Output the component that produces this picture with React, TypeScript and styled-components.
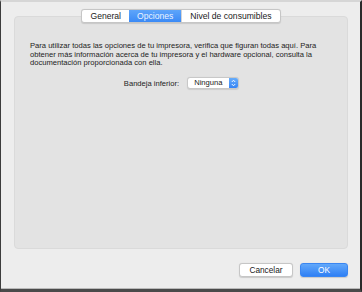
import React, { useState } from 'react';
import styled, { createGlobalStyle } from 'styled-components';

const GlobalStyle = createGlobalStyle`
html, body {
  margin: 0;
  padding: 0;
  background: #ededed;
}
* {
  box-sizing: border-box;
}
`;

const tabs = ['General', 'Opciones', 'Nivel de consumibles'];

export default function App() {
  const [active, setActive] = useState('Opciones');

  return (
    <>
      <GlobalStyle />
      <Window>
        <TabBar>
          {tabs.map(tab => (
            <Tab key={tab} $active={tab === active} onClick={() => setActive(tab)}>
              {tab}
            </Tab>
          ))}
        </TabBar>
        <Panel>
          <Intro>
            Para utilizar todas las opciones de tu impresora, verifica que figuran todas aquí. Para
            obtener más información acerca de tu impresora y el hardware opcional, consulta la
            documentación proporcionada con ella.
          </Intro>
          <OptionRow>
            <OptionLabel>Bandeja inferior:</OptionLabel>
            <PopUp>
              <PopUpValue>Ninguna</PopUpValue>
              <Stepper>
                <svg width="5" height="8" viewBox="0 0 5 8">
                  <path d="M0.8 3 L2.5 1.2 L4.2 3 M0.8 5 L2.5 6.8 L4.2 5" fill="none" stroke="#fff" strokeWidth="0.9" />
                </svg>
              </Stepper>
            </PopUp>
          </OptionRow>
        </Panel>
        <ButtonRow>
          <Button>Cancelar</Button>
          <Button $primary>OK</Button>
        </ButtonRow>
      </Window>
    </>
  );
}

const Window = styled.div`
width: 362px;
height: 292px;
display: flex;
flex-direction: column;
padding: 7px 12px 0 13px;
background: #ededed;
border-top: 2px solid #d6d6d6;
border-left: 1px solid #3c3c3c;
border-right: 2px solid #2a2a2a;
border-bottom: 3px solid #4a4a4a;
box-shadow: inset 0 -1px 0 #b9b9b9;
font-family: "Liberation Sans", Arial, sans-serif;
color: #222;
`;

const TabBar = styled.div`
display: flex;
align-self: center;
height: 14px;
margin-bottom: -7px;
position: relative;
z-index: 1;
background: #fff;
border: 1px solid #c6c6c6;
border-radius: 3px;
box-shadow: 0 0.5px 1px rgba(0, 0, 0, 0.12);
overflow: hidden;
`;

const Tab = styled.button<{ $active?: boolean }>`
border: 0;
margin: 0;
height: 100%;
padding: 0 8px;
font-family: inherit;
font-size: 8.6px;
line-height: 12px;
cursor: pointer;
color: ${p => (p.$active ? '#eaf3ff' : '#1a1a1a')};
background: ${p => (p.$active ? 'linear-gradient(#5ea5fa, #3b8af6)' : 'transparent')};
border-left: ${p => (p.$active ? '0' : '1px solid #d4d4d4')};

&:first-child {
  border-left: 0;
}
`;

const Panel = styled.div`
height: 233px;
padding: 25px 14px 0 15px;
background: #e3e3e3;
border: 1px solid #dadada;
border-radius: 4px;
`;

const Intro = styled.p`
margin: 0;
font-size: 7.6px;
line-height: 8.7px;
color: #222;
`;

const OptionRow = styled.div`
display: flex;
align-items: center;
justify-content: center;
gap: 8px;
margin-top: 9px;
`;

const OptionLabel = styled.span`
font-size: 7.6px;
color: #222;
`;

const PopUp = styled.div`
display: flex;
width: 52px;
height: 12px;
background: #fff;
border: 1px solid #c8c8c8;
border-radius: 3px;
overflow: hidden;
box-shadow: 0 0.5px 1px rgba(0, 0, 0, 0.1);
`;

const PopUpValue = styled.span`
flex: 1;
padding-left: 6px;
font-size: 7.6px;
line-height: 10px;
color: #222;
`;

const Stepper = styled.span`
width: 9px;
display: flex;
align-items: center;
justify-content: center;
background: linear-gradient(#68adfa, #3584f6);
`;

const ButtonRow = styled.div`
display: flex;
justify-content: flex-end;
gap: 7px;
margin-top: 14px;
`;

const Button = styled.button<{ $primary?: boolean }>`
height: 14px;
width: ${p => (p.$primary ? '48px' : '54px')};
margin: 0;
padding: 0;
font-family: inherit;
font-size: 8.3px;
line-height: 12px;
border-radius: 3px;
cursor: pointer;
color: ${p => (p.$primary ? '#fff' : '#1a1a1a')};
background: ${p => (p.$primary ? 'linear-gradient(#62a8fa, #2f80f5)' : '#fff')};
border: 1px solid ${p => (p.$primary ? '#3a86f2' : '#c6c6c6')};
box-shadow: 0 0.5px 1px rgba(0, 0, 0, 0.15);
`;
